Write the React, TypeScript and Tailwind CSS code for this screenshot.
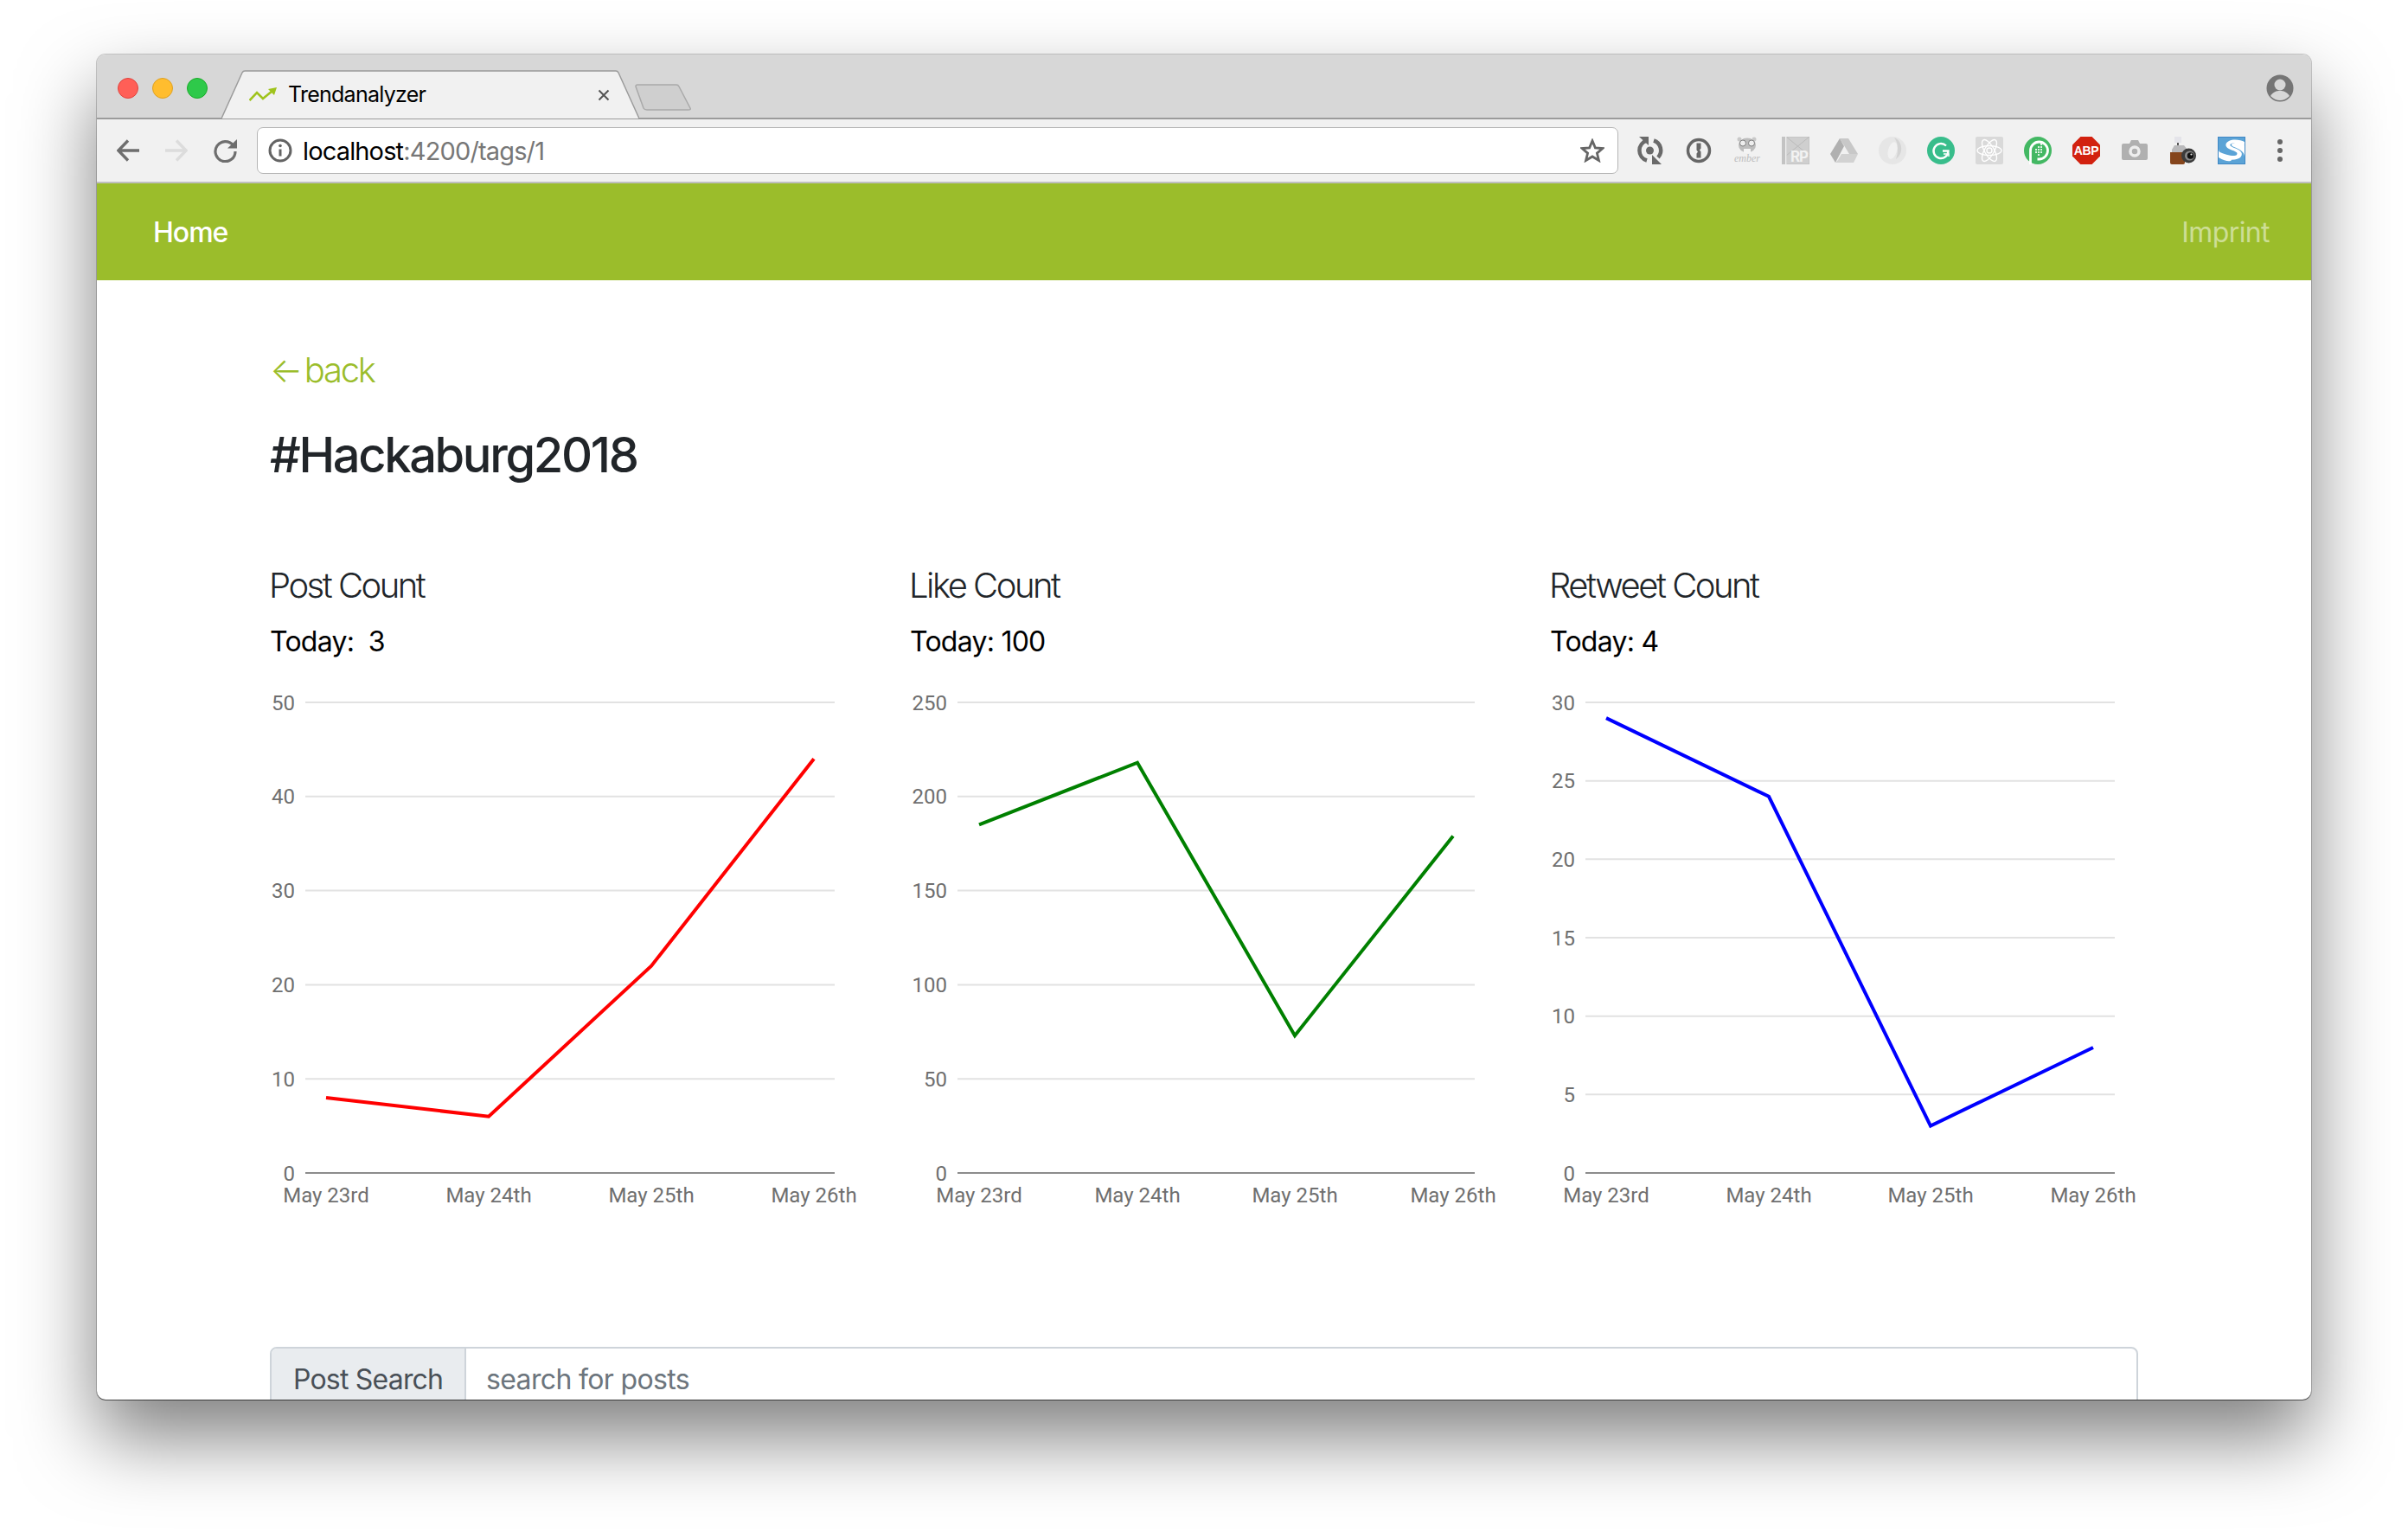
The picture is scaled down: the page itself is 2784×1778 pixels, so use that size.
import React from "react";

type ChartProps = {
  title: string;
  today: string;
  color: string;
  max: number;
  ticks: number[];
  plotLeft: number;
  points: number[];
  values: number[];
};

const PLOT_RIGHT = 653;
const PLOT_TOP = 23;
const PLOT_BOTTOM = 567;
const DAYS = ["May 23rd", "May 24th", "May 25th", "May 26th"];

const charts: ChartProps[] = [
  { title: "Post Count", today: "Today:\u00a0 3", color: "#ff0000", max: 50, ticks: [0, 10, 20, 30, 40, 50], plotLeft: 41, points: [65, 253, 441, 629], values: [8, 6, 22, 44] },
  { title: "Like Count", today: "Today: 100", color: "#008000", max: 250, ticks: [0, 50, 100, 150, 200, 250], plotLeft: 55, points: [80, 263, 445, 628], values: [185, 218, 73, 179] },
  { title: "Retweet Count", today: "Today: 4", color: "#0000ff", max: 30, ticks: [0, 5, 10, 15, 20, 25, 30], plotLeft: 41, points: [65, 253, 440, 628], values: [29, 24, 3, 8] },
];

const LineChart = ({ color, max, ticks, plotLeft, points, values }: ChartProps) => {
  const toY = (v: number) => PLOT_BOTTOM - (v / max) * (PLOT_BOTTOM - PLOT_TOP);
  return (
    <svg width="740" height="620" className="ml-[1px] mt-[27px] block font-['Roboto',sans-serif]">
      {ticks.map((t) => (
        <g key={t}>
          <line x1={plotLeft} x2={PLOT_RIGHT} y1={toY(t)} y2={toY(t)} stroke={t === 0 ? "#8c8c8c" : "#e2e2e2"} strokeWidth="2" />
          <text x={plotLeft - 12} y={toY(t) + 8.5} textAnchor="end" fontSize="24" fill="#6f6f6f">{t}</text>
        </g>
      ))}
      <polyline
        points={points.map((x, i) => `${x},${toY(values[i])}`).join(" ")}
        fill="none"
        stroke={color}
        strokeWidth="4"
      />
      {DAYS.map((d, i) => (
        <text key={d} x={points[i]} y={601} textAnchor="middle" fontSize="24" fill="#6f6f6f">{d}</text>
      ))}
    </svg>
  );
};

const ExtIcon = ({ children }: { children: React.ReactNode }) => (
  <svg width="32" height="32" viewBox="0 0 32 32" className="block shrink-0">{children}</svg>
);

const ExtensionIcons = () => (
  <div className="ml-[21px] flex items-center gap-6">
    {/* sync */}
    <ExtIcon>
      <path d="M12 4.5A12 12 0 0 0 12 27.5" fill="none" stroke="#6a6a6a" strokeWidth="4.5" />
      <path d="M20 4.5A12 12 0 0 1 25 24" fill="none" stroke="#6a6a6a" strokeWidth="4.5" />
      <path d="M3 0h11v10z" fill="#6a6a6a" />
      <path d="M29 32H18V21z" fill="#6a6a6a" />
      <circle cx="15.5" cy="16" r="4.5" fill="#6a6a6a" />
    </ExtIcon>
    {/* 1password */}
    <ExtIcon>
      <circle cx="16" cy="16" r="12.5" fill="none" stroke="#666" strokeWidth="3.5" />
      <path d="M13.5 7.5h5v6l-1.5 2 1.5 2v7h-5v-5l1.5-2-1.5-2z" fill="#666" />
    </ExtIcon>
    {/* ember */}
    <ExtIcon>
      <circle cx="7" cy="3" r="2.5" fill="#c9c9c9" />
      <circle cx="24" cy="3" r="2.5" fill="#c9c9c9" />
      <ellipse cx="16" cy="10" rx="10" ry="8.5" fill="#bdbdbd" />
      <circle cx="11" cy="7.5" r="3.5" fill="#eee" stroke="#7f7f7f" />
      <circle cx="21" cy="7.5" r="3.5" fill="#eee" stroke="#7f7f7f" />
      <path d="M12 14h8v5h-8z" fill="#f4f4f4" />
      <text x="16" y="29" textAnchor="middle" fontSize="12" fill="#bdbdbd" fontFamily="Liberation Serif, serif" fontStyle="italic">ember</text>
    </ExtIcon>
    {/* rp */}
    <ExtIcon>
      <rect width="32" height="32" fill="#c3c3c3" />
      <path d="M5 0h27v32H5zM5 0l27 22M32 0L5 22" fill="#cfcfcf" stroke="#bbb" />
      <rect x="4" width="1.5" height="32" fill="#eee" />
      <text x="20" y="29" textAnchor="middle" fontSize="17" fontWeight="700" fill="#f2f2f2" fontFamily="Inter, sans-serif" letterSpacing="-1">RP</text>
    </ExtIcon>
    {/* drive */}
    <ExtIcon>
      <path d="M11 2h10l11 18H22z" fill="#c8c8c8" />
      <path d="M11 2l5 9-10 19-6-10z" fill="#b0b0b0" />
      <path d="M9 27l4-7h19l-5 10H6z" fill="#d2d2d2" />
    </ExtIcon>
    {/* ring */}
    <ExtIcon>
      <circle cx="16" cy="16" r="16" fill="#e6e6e6" />
      <ellipse cx="16" cy="16" rx="5" ry="10" fill="#f1f1f1" transform="rotate(15 16 16)" />
      <path d="M18 1c9 3 12 18 2 25 3-9 3-18-2-25z" fill="#d4d4d4" />
    </ExtIcon>
    {/* grammarly */}
    <ExtIcon>
      <circle cx="16" cy="16" r="16" fill="#38bd8b" />
      <path d="M22 10.5A8.5 8.5 0 1 0 24.5 16.5H18" fill="none" stroke="#fff" strokeWidth="2.4" />
      <path d="M19 20h6v3" fill="none" stroke="#fff" strokeWidth="1.5" />
    </ExtIcon>
    {/* react */}
    <ExtIcon>
      <rect width="32" height="32" rx="2" fill="#d9d9d9" />
      <g fill="none" stroke="#fff" strokeWidth="1.4">
        <ellipse cx="16" cy="16" rx="14" ry="5.5" />
        <ellipse cx="16" cy="16" rx="14" ry="5.5" transform="rotate(60 16 16)" />
        <ellipse cx="16" cy="16" rx="14" ry="5.5" transform="rotate(120 16 16)" />
      </g>
      <circle cx="16" cy="16" r="3" fill="none" stroke="#fff" strokeWidth="1.4" />
    </ExtIcon>
    {/* green p */}
    <ExtIcon>
      <circle cx="16" cy="16" r="16" fill="#43b863" />
      <path d="M7.5 32V16a10 10 0 1 1 10 10h-2" fill="none" stroke="#fff" strokeWidth="2.8" />
      <g fill="#fff">
        <circle cx="14" cy="18" r="1.1" /><circle cx="17" cy="18" r="1.1" /><circle cx="20" cy="18" r="1.1" />
        <circle cx="14" cy="15" r="1.1" /><circle cx="17" cy="15" r="1.1" /><circle cx="20" cy="15" r="1.1" />
        <circle cx="17" cy="12" r="1.1" /><circle cx="20" cy="12" r="1.1" /><circle cx="20" cy="9" r="1.1" />
        <circle cx="17" cy="21" r="1.1" />
      </g>
    </ExtIcon>
    {/* adblock plus */}
    <ExtIcon>
      <path d="M9.4 0h13.2L32 9.4v13.2L22.6 32H9.4L0 22.6V9.4z" fill="#d2210f" />
      <text x="16" y="21" textAnchor="middle" fontSize="14" fontWeight="700" fill="#fff" fontFamily="Liberation Sans, sans-serif" letterSpacing="-0.3">ABP</text>
    </ExtIcon>
    {/* camera */}
    <ExtIcon>
      <path d="M3 8h7l2-4h8l2 4h7a2 2 0 0 1 2 2v15a2 2 0 0 1-2 2H3a2 2 0 0 1-2-2V10a2 2 0 0 1 2-2z" fill="#b0b0b0" />
      <circle cx="16" cy="17" r="5" fill="none" stroke="#eee" strokeWidth="3.5" />
    </ExtIcon>
    {/* coffee camera */}
    <ExtIcon>
      <path d="M6 0h8v7H6z" fill="#e4e4ea" />
      <path d="M9 7h2v3H9z" fill="#555" />
      <path d="M3 15l3-5h11l4 5v4H3z" fill="#b9b9bb" />
      <path d="M1 18h17v12a2 2 0 0 1-2 2H3a2 2 0 0 1-2-2z" fill="#85451c" />
      <circle cx="22.5" cy="22" r="8.5" fill="#3c3c3c" />
      <circle cx="23.5" cy="22" r="5.5" fill="#8a8a8a" />
      <circle cx="24.5" cy="22" r="3.8" fill="#111" />
      <circle cx="25.5" cy="20.5" r="1.1" fill="#ddd" />
    </ExtIcon>
    {/* s */}
    <ExtIcon>
      <rect x="0.5" y="0.5" width="31" height="31" fill="#fff" stroke="#3f88c5" />
      <path d="M1 1h30v9C27 6 22 6 17 8c-2 1-1 3 2 4 5 2 12 5 12 11v8H1v-7c8 5 14 5 15 3 1-3-15-3-15-13z" fill="#5ba3d6" />
      <path d="M31 6c-4-2-12-4-18-1-6 3-4 8 2 10 5 2 9 3 7 6-2 2-12 1-21-4v6c10 5 22 5 26 0 3-5-2-8-8-10-5-2-6-4-3-5 4-1 10 0 15 2z" fill="#fff" />
    </ExtIcon>
    {/* menu */}
    <svg width="32" height="32" viewBox="0 0 32 32" className="block shrink-0" fill="#666">
      <circle cx="16" cy="6" r="3" /><circle cx="16" cy="16" r="3" /><circle cx="16" cy="26" r="3" />
    </svg>
  </div>
);

export default function App() {
  return (
    <div className="h-[1778px] overflow-hidden bg-white pl-[112px] pt-[63px] font-['Inter',sans-serif]">
      <div className="flex h-[1555px] w-[2560px] flex-col overflow-hidden rounded-[10px] bg-white shadow-[0_44px_88px_rgba(0,0,0,0.5),0_0_0_1px_rgba(0,0,0,0.2),0_1px_0_rgba(0,0,0,0.5)]">
        {/* title bar */}
        <div className="flex h-[75px] shrink-0 items-end border-b-2 border-[#9b9b9b] bg-[#d7d7d7] pl-6">
          <div className="mb-[22px] flex gap-4">
            <span className="size-6 rounded-full border border-[#e0443e] bg-[#ff5f57]" />
            <span className="size-6 rounded-full border border-[#dea123] bg-[#ffbd2e]" />
            <span className="size-6 rounded-full border border-[#1aab29] bg-[#2ec94a]" />
          </div>
          <div className="relative -mb-[2px] ml-4 flex h-[57px] w-[483px] shrink-0 items-center pl-8 pr-[34px]">
            <svg width="483" height="57" className="absolute inset-0">
              <path d="M0 56 L24 3 Q25 1 27 1 L456 1 Q458 1 459 3 L483 56" fill="#f1f1f1" stroke="#9b9b9b" strokeWidth="1.5" />
            </svg>
            <svg width="32" height="18" viewBox="0 0 32 18" className="relative shrink-0">
              <path d="M0.5 15 L9 6 L16 13 L27 4" fill="none" stroke="#9fc31c" strokeWidth="2.6" />
              <path d="M22 2 L32 0 L29 9z" fill="#9fc31c" />
            </svg>
            <span className="relative ml-[13px] flex-1 text-[25px] leading-none tracking-[-0.75px] text-black">Trendanalyzer</span>
            <svg width="14" height="14" viewBox="0 0 14 14" className="relative shrink-0">
              <path d="M1.5 1.5l11 11M12.5 1.5l-11 11" stroke="#555" strokeWidth="2" />
            </svg>
          </div>
          <svg width="65" height="31" viewBox="0 0 65 31" className="mb-2 -ml-[5px] shrink-0">
            <path d="M3 1 H48 Q50 1 51 3 L64 28 Q65 30 62 30 H14 Q11 30 10 28 L1 3 Q1 1 3 1z" fill="#cfcfcf" stroke="#a9a9a9" strokeWidth="1.5" />
          </svg>
          <svg width="32" height="32" viewBox="0 0 32 32" className="mb-[18px] ml-auto mr-5 shrink-0">
            <circle cx="16" cy="16" r="15.5" fill="#757575" />
            <circle cx="16" cy="12" r="6.5" fill="#d7d7d7" />
            <path d="M5 25c3-5 7-6 11-6s8 1 11 6c-3 3-7 5-11 5s-8-2-11-5z" fill="#d7d7d7" />
          </svg>
        </div>

        {/* toolbar */}
        <div className="flex h-[74px] shrink-0 items-center border-b-2 border-[#bfbfbf] bg-[#f1f1f1] pl-[23px]">
          <svg width="26" height="26" viewBox="0 0 26 26" className="shrink-0" fill="none" stroke="#6e6e6e" strokeWidth="3.4">
            <path d="M26 13H2M13 1.5L1.8 13 13 24.5" />
          </svg>
          <svg width="26" height="26" viewBox="0 0 26 26" className="ml-[30px] shrink-0" fill="none" stroke="#dcdcdc" strokeWidth="3.4">
            <path d="M0 13h24M13 1.5L24.2 13 13 24.5" />
          </svg>
          <svg width="27" height="27" viewBox="0 0 27 27" className="ml-[30px] shrink-0" fill="none">
            <path d="M22.5 7A11.5 11.5 0 1 0 25 14" stroke="#6e6e6e" strokeWidth="3.2" />
            <path d="M16 10.5L27 0v10.5z" fill="#6e6e6e" />
          </svg>
          <div className="ml-[23px] flex h-[54px] w-[1574px] shrink-0 items-center rounded-[7px] border-[1.5px] border-[#b5b5b5] bg-white pl-[12px] pr-[15px]">
            <svg width="28" height="28" viewBox="0 0 28 28" className="shrink-0" fill="none">
              <circle cx="14" cy="14" r="12" stroke="#646464" strokeWidth="3" />
              <path d="M14 12.5v8" stroke="#646464" strokeWidth="3" />
              <circle cx="14" cy="8.5" r="1.8" fill="#646464" />
            </svg>
            <span className="ml-[12px] flex-1 text-[29px] leading-none tracking-[-0.85px] text-black">
              localhost<span className="text-[#777]">:4200/tags/1</span>
            </span>
            <svg width="28" height="28" viewBox="0 0 30 30" className="shrink-0" fill="none" stroke="#666" strokeWidth="3">
              <path d="M15 3l3.6 8.6 9.2.7-7 6 2.2 9L15 22.5 7 27.3l2.2-9-7-6 9.2-.7z" />
            </svg>
          </div>
          <ExtensionIcons />
        </div>

        {/* navbar */}
        <div className="flex h-[112px] shrink-0 items-center justify-between bg-[#9bbd2b] pl-[65px] pr-[48px] pt-[2px] text-[32px]">
          <span className="font-medium tracking-[-1px] text-white">Home</span>
          <span className="tracking-[-0.6px] text-white/50">Imprint</span>
        </div>

        {/* page */}
        <div className="flex-1 pl-[200px] pt-[80px]">
          <a className="block text-[40px] font-light leading-[48px] tracking-[-2.3px] text-[#9bbd2b] [word-spacing:-5px]">← back</a>
          <h1 className="mt-[40px] text-[56px] font-medium leading-[68px] tracking-[-2.35px] text-[#212529]">#Hackaburg2018</h1>
          <div className="mt-[93px] -ml-[1px] grid w-[2220px] grid-cols-3">
            {charts.map((chart) => (
              <div key={chart.title}>
                <h2 className="text-[40px] font-light leading-[48px] tracking-[-2.5px] text-[#212529]">{chart.title}</h2>
                <p className="ml-[1px] mt-[21px] text-[32px] leading-[40px] tracking-[-0.75px] text-black">{chart.today}</p>
                <LineChart {...chart} />
              </div>
            ))}
          </div>
          <div className="mt-[148px] flex h-[76px] w-[2160px] overflow-hidden rounded-lg border-2 border-[#ced4da] text-[32px] leading-[72px]">
            <div className="w-[225px] shrink-0 border-r-2 border-[#ced4da] bg-[#e9ecef] pl-[25px] tracking-[-0.8px] text-[#495057]">Post Search</div>
            <div className="pl-[23px] tracking-[-0.65px] text-[#6c757d]">search for posts</div>
          </div>
        </div>
      </div>
    </div>
  );
}
